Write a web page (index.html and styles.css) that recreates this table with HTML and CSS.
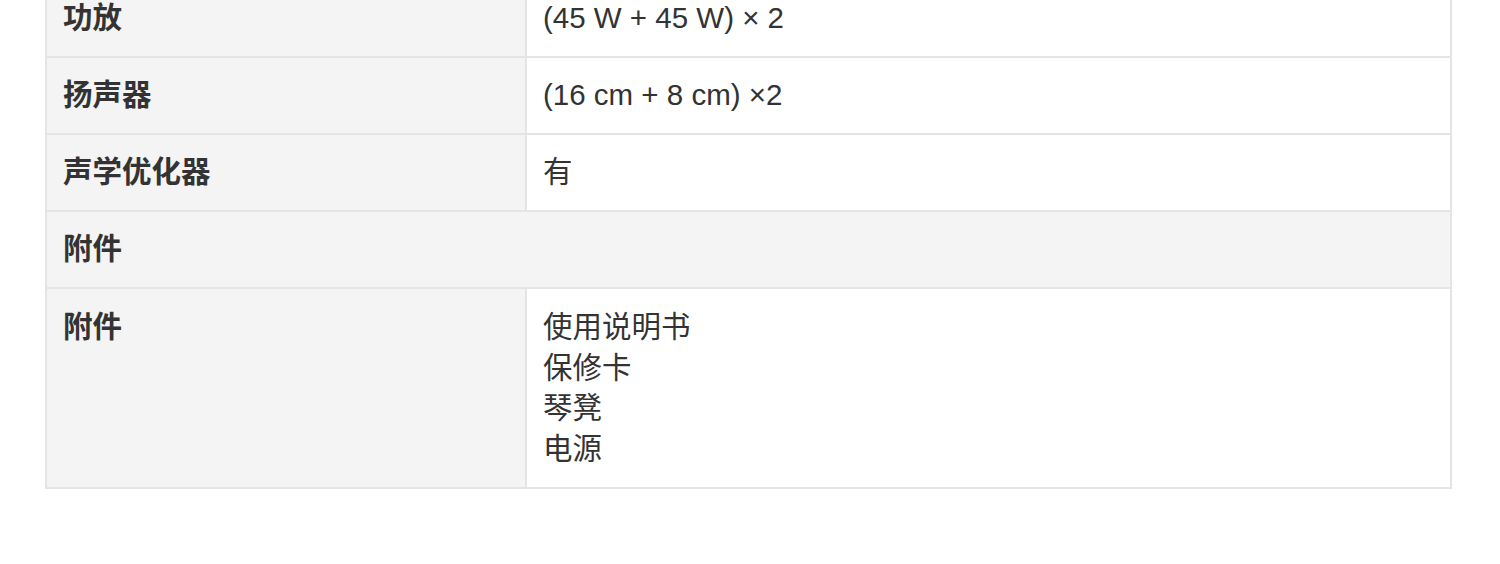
FILE: index.html
```html
<!DOCTYPE html>
<html lang="zh-CN">
<head>
<meta charset="utf-8">
<title>规格</title>
<link rel="stylesheet" href="styles.css">
</head>
<body>
<div class="page">
  <table class="spec">
    <tbody>
      <tr>
        <th class="label">功放</th>
        <td class="value">(45 W + 45 W) × 2</td>
      </tr>
      <tr>
        <th class="label">扬声器</th>
        <td class="value">(16 cm + 8 cm) ×2</td>
      </tr>
      <tr>
        <th class="label">声学优化器</th>
        <td class="value">有</td>
      </tr>
      <tr>
        <th class="section" colspan="2">附件</th>
      </tr>
      <tr class="multi">
        <th class="label">附件</th>
        <td class="value">使用说明书<br>保修卡<br>琴凳<br>电源</td>
      </tr>
    </tbody>
  </table>
</div>
</body>
</html>
```

FILE: styles.css
```css
html, body {
  margin: 0;
  padding: 0;
  background: #ffffff;
}

.page {
  padding: 0 48px 0 45px;
  margin-top: -21px;
  font-family: "Liberation Sans", "Noto Sans CJK SC", sans-serif;
  font-size: 29.5px;
  color: #333333;
}

.spec {
  width: 100%;
  border-collapse: collapse;
  table-layout: fixed;
}

.spec th,
.spec td {
  border: 2px solid #e4e4e4;
  padding: 17px 16px 18px;
  line-height: 40px;
  text-align: left;
  vertical-align: top;
}

.spec .multi th,
.spec .multi td {
  padding-top: 18px;
  padding-bottom: 18px;
}

.spec .multi td {
  line-height: 40.5px;
}

.label {
  width: 446px;
  background: #f4f4f4;
  font-weight: bold;
}

.section {
  background: #f4f4f4;
  font-weight: bold;
}

.value {
  background: #ffffff;
  font-weight: normal;
}
```
